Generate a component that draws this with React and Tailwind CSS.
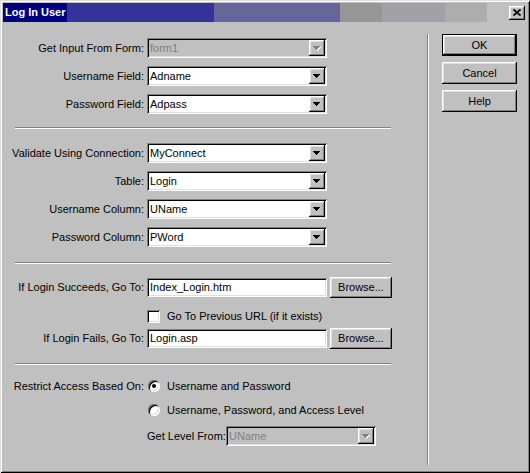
import React from 'react';

const sunken = "shadow-[inset_1px_1px_0_#808080,inset_-1px_-1px_0_#fff,inset_2px_2px_0_#000,inset_-2px_-2px_0_#dfdfdf]";
const raised = "shadow-[inset_-1px_-1px_0_#000,inset_1px_1px_0_#fff,inset_-2px_-2px_0_#808080,inset_2px_2px_0_#dfdfdf]";

function Arrow({ disabled }) {
  return (
    <svg width="8" height="5" viewBox="0 0 8 5" shapeRendering="crispEdges">
      {disabled && (
        <g fill="#fff">
          <rect x="1" y="1" width="7" height="1" />
          <rect x="2" y="2" width="5" height="1" />
          <rect x="3" y="3" width="3" height="1" />
          <rect x="4" y="4" width="1" height="1" />
        </g>
      )}
      <g fill={disabled ? '#808080' : '#000'}>
        <rect x="0" y="0" width="7" height="1" />
        <rect x="1" y="1" width="5" height="1" />
        <rect x="2" y="2" width="3" height="1" />
        <rect x="3" y="3" width="1" height="1" />
      </g>
    </svg>
  );
}

function Select({ value, disabled, w = 'w-[180px]' }) {
  return (
    <div className={`${w} h-[20px] flex items-center ${sunken} ${disabled ? 'bg-[#c0c0c0] text-[#808080]' : 'bg-white text-black'}`}>
      <span className="flex-1 pl-[3px] leading-none">{value}</span>
      <div className={`w-[16px] h-[16px] mr-[2px] flex items-center justify-center bg-[#c0c0c0] ${raised}`}>
        <Arrow disabled={disabled} />
      </div>
    </div>
  );
}

function Input({ value }) {
  return (
    <div className={`w-[180px] h-[19px] flex items-center bg-white ${sunken}`}>
      <span className="pl-[3px] leading-none">{value}</span>
    </div>
  );
}

function Button({ children, def, w = 'w-[75px]', h = 'h-[22px]' }) {
  if (def) {
    return (
      <div className={`${w} ${h} border border-black`}>
        <div className={`w-full h-full flex items-center justify-center ${raised}`}>{children}</div>
      </div>
    );
  }
  return (
    <div className={`${w} ${h} flex items-center justify-center ${raised}`}>{children}</div>
  );
}

function Row({ label, children, className = '' }) {
  return (
    <div className={`flex items-center h-[20px] ${className}`}>
      <span className="w-[144px] shrink-0 text-right pr-[3px] whitespace-nowrap">{label}</span>
      {children}
    </div>
  );
}

function Sep({ className = '' }) {
  return <div className={`ml-[12px] w-[376px] h-[2px] border-t border-b border-t-[#808080] border-b-white ${className}`} />;
}

function Radio({ checked }) {
  return (
    <div className={`w-[12px] h-[12px] rounded-full bg-white flex items-center justify-center ${sunken}`}>
      {checked && <div className="w-[4px] h-[4px] rounded-full bg-black" />}
    </div>
  );
}

export default function App() {
  return (
    <div className={`w-[530px] h-[473px] p-[3px] flex flex-col bg-[#c0c0c0] text-[11px] text-black font-['Liberation_Sans',Arial,sans-serif] ${"shadow-[inset_1px_1px_0_#dfdfdf,inset_-1px_-1px_0_#000,inset_2px_2px_0_#fff,inset_-2px_-2px_0_#808080]"}`}>
      {/* Title bar */}
      <div className="h-[19px] flex items-center bg-[linear-gradient(to_right,#000080_0px,#000080_64px,#333399_64px,#333399_211px,#666699_211px,#666699_337px,#969696_337px,#969696_379px,#a2a1a8_379px,#a2a1a8_442px,#adadad_442px,#adadad_484px,#c0c0c0_484px)]">
        <span className="flex-1 pl-[2px] font-bold text-white leading-none">Log In User</span>
        <div className={`w-[16px] h-[14px] mr-[2px] flex items-center justify-center bg-[#c0c0c0] ${raised}`}>
          <svg width="8" height="7" viewBox="0 0 8 7">
            <path d="M0.5 0.5 L7.5 6.5 M7.5 0.5 L0.5 6.5" stroke="#000" strokeWidth="1.8" />
          </svg>
        </div>
      </div>

      {/* Body */}
      <div className="flex-1 flex">
        <div className="w-[424px] flex flex-col pt-[16px]">
          <Row label="Get Input From Form:"><Select value="form1" disabled /></Row>
          <Row label="Username Field:" className="mt-[8px]"><Select value="Adname" /></Row>
          <Row label="Password Field:" className="mt-[8px]"><Select value="Adpass" /></Row>

          <Sep className="mt-[13px]" />

          <Row label="Validate Using Connection:" className="mt-[14px]"><Select value="MyConnect" /></Row>
          <Row label="Table:" className="mt-[8px]"><Select value="Login" /></Row>
          <Row label="Username Column:" className="mt-[8px]"><Select value="UName" /></Row>
          <Row label="Password Column:" className="mt-[8px]"><Select value="PWord" /></Row>

          <Sep className="mt-[15px]" />

          <Row label="If Login Succeeds, Go To:" className="mt-[13px] h-[21px]">
            <Input value="Index_Login.htm" />
            <div className="ml-[3px]"><Button w="w-[62px]" h="h-[21px]">Browse...</Button></div>
          </Row>
          <div className="flex items-center h-[13px] mt-[12px] pl-[144px]">
            <div className={`w-[13px] h-[13px] bg-white ${sunken}`} />
            <span className="ml-[7px] whitespace-nowrap">Go To Previous URL (if it exists)</span>
          </div>
          <Row label="If Login Fails, Go To:" className="mt-[5px] h-[21px]">
            <Input value="Login.asp" />
            <div className="ml-[3px]"><Button w="w-[62px]" h="h-[21px]">Browse...</Button></div>
          </Row>

          <Sep className="mt-[14px]" />

          <div className="flex items-center h-[16px] mt-[13px]">
            <span className="w-[144px] shrink-0 text-right pr-[3px] whitespace-nowrap">Restrict Access Based On:</span>
            <div className="ml-[1px]"><Radio checked /></div>
            <span className="ml-[7px]">Username and Password</span>
          </div>
          <div className="flex items-center h-[16px] mt-[8px] pl-[145px]">
            <Radio />
            <span className="ml-[7px]">Username, Password, and Access Level</span>
          </div>
          <div className="flex items-center h-[20px] mt-[8px] pl-[144px]">
            <span className="w-[79px] shrink-0 whitespace-nowrap">Get Level From:</span>
            <Select value="UName" disabled w="w-[150px]" />
          </div>
        </div>

        <div className="flex-1 mt-[12px] mb-[5px] border-l border-[#808080] shadow-[inset_1px_0_0_#fff] pl-[14px] flex flex-col gap-[6px]">
          <Button def>OK</Button>
          <Button>Cancel</Button>
          <Button>Help</Button>
        </div>
      </div>
    </div>
  );
}
